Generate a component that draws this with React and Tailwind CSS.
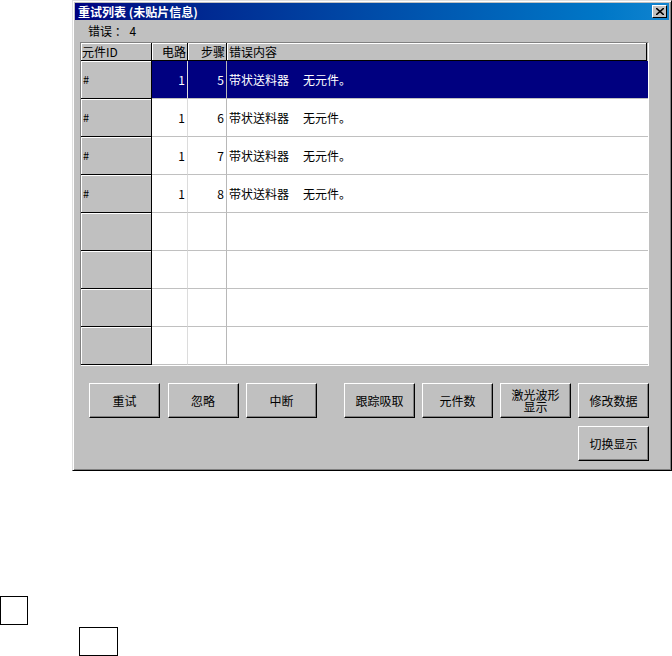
const rows = [
  { id: "#", circuit: "1", step: "5", feeder: "带状送料器", msg: "无元件。" },
  { id: "#", circuit: "1", step: "6", feeder: "带状送料器", msg: "无元件。" },
  { id: "#", circuit: "1", step: "7", feeder: "带状送料器", msg: "无元件。" },
  { id: "#", circuit: "1", step: "8", feeder: "带状送料器", msg: "无元件。" },
  {}, {}, {}, {},
];

const Btn = ({ children, className = "" }) => (
  <button
    className={
      "w-[71px] h-[35px] bg-[#c0c0c0] border-t border-l border-white border-r border-b border-r-black border-b-black shadow-[inset_-1px_-1px_#808080] text-[12px] leading-[12px] text-black flex flex-col items-center justify-center " +
      className
    }
  >
    {children}
  </button>
);

const GridRow = ({ row, selected }) => {
  const dataCls = selected ? "bg-[#000080] text-white" : "bg-white text-black";
  return (
    <div className="flex h-[38px]">
      <div className="w-[71px] shrink-0 bg-[#c0c0c0] border-r border-b border-black shadow-[inset_1px_1px_#fff] flex items-center pl-[2px] text-[11px]">
        {row.id}
      </div>
      <div className={"w-[36px] shrink-0 border-r border-r-[#dcdcdc] border-b border-b-[#c0c0c0] flex items-center justify-end pr-[2px] " + dataCls}>
        {row.circuit}
      </div>
      <div className={"w-[39px] shrink-0 border-r border-r-[#b8b8b8] border-b border-b-[#c0c0c0] flex items-center justify-end pr-[2px] " + dataCls}>
        {row.step}
      </div>
      <div className={"flex-1 border-b border-b-[#c0c0c0] flex items-center pl-[2px] " + dataCls}>
        {row.feeder && (
          <>
            <span>{row.feeder}</span>
            <span className="ml-[14px]">{row.msg}</span>
          </>
        )}
      </div>
    </div>
  );
};

export default function App() {
  return (
    <div
      className="w-[672px] h-[656px] bg-white overflow-hidden text-[12px] text-black"
      style={{ fontFamily: '"Noto Sans CJK SC", "Liberation Sans", sans-serif' }}
    >
      {/* window */}
      <div className="ml-[72px] w-[600px] h-[471px] bg-[#c0c0c0] border border-[#dfdfdf] border-r-black border-b-black shadow-[inset_1px_1px_#fff,inset_-1px_-1px_#808080] p-[2px] flex flex-col">
        {/* title bar */}
        <div className="h-[17px] bg-gradient-to-r from-[#000080] to-[#1084d0] flex items-center justify-between pl-[3px] pr-[2px]">
          <span className="text-white font-bold text-[12px] leading-none">重试列表 (未贴片信息)</span>
          <div className="w-[15px] h-[13px] bg-[#c0c0c0] border-t border-l border-white border-r border-b border-r-black border-b-black flex items-center justify-center">
            <svg width="8" height="7" viewBox="0 0 8 7">
              <path d="M0 0 L8 7 M8 0 L0 7" stroke="black" strokeWidth="1.6" />
            </svg>
          </div>
        </div>

        {/* error count */}
        <div className="h-[22px] flex items-center pl-[13px]">错误 ： 4</div>

        {/* grid */}
        <div className="ml-[5px] w-[569px] h-[324px] border border-[#808080] border-r-white border-b-white bg-[#c0c0c0] overflow-hidden">
          <div className="flex h-[18px]">
            <div className="w-[71px] shrink-0 border-r border-b border-black shadow-[inset_1px_1px_#fff] flex items-center pl-[1px]">元件ID</div>
            <div className="w-[36px] shrink-0 border-r border-b border-black shadow-[inset_1px_1px_#fff] flex items-center justify-end pr-[1px]">电路</div>
            <div className="w-[39px] shrink-0 border-r border-b border-black shadow-[inset_1px_1px_#fff] flex items-center justify-end pr-[1px]">步骤</div>
            <div className="w-[420px] shrink-0 border-r border-b border-black shadow-[inset_1px_1px_#fff] flex items-center pl-[2px]">错误内容</div>
          </div>
          {rows.map((r, i) => (
            <GridRow key={i} row={r} selected={i === 0} />
          ))}
        </div>

        {/* buttons */}
        <div className="flex mt-[17px] ml-[14px]">
          <div className="flex gap-[7.5px]">
            <Btn>重试</Btn>
            <Btn>忽略</Btn>
            <Btn>中断</Btn>
          </div>
          <div className="flex gap-[7px] ml-[27px]">
            <Btn>跟踪吸取</Btn>
            <Btn>元件数</Btn>
            <Btn>
              <span>激光波形</span>
              <span>显示</span>
            </Btn>
            <Btn>修改数据</Btn>
          </div>
        </div>
        <div className="flex justify-end mt-[8px] pr-[20px]">
          <Btn>切换显示</Btn>
        </div>
      </div>

      {/* loose boxes */}
      <div className="mt-[125px] w-[28px] h-[29px] border-[1.5px] border-black" />
      <div className="mt-[2px] ml-[79px] w-[39px] h-[29px] border-[1.5px] border-black" />
    </div>
  );
}
